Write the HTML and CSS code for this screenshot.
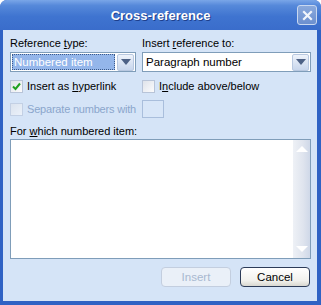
FILE: index.html
```html
<!DOCTYPE html>
<html lang="en">
<head>
    <meta charset="UTF-8">
    <title>Cross-reference</title>
    <link rel="stylesheet" href="styles.css">
</head>
<body>
    <div class="dialog">
        <div class="titlebar">
            <span class="title">Cross-reference</span>
            <button class="close-button" aria-label="Close">
                <svg width="11" height="11" viewBox="0 0 11 11">
                    <path d="M2 2 L9 9 M9 2 L2 9" stroke="#f2f5fb" stroke-width="2.2" stroke-linecap="square"/>
                </svg>
            </button>
        </div>

        <div class="content">
            <div class="row two-col">
                <div class="field">
                    <label>Reference <u>t</u>ype:</label>
                    <div class="select">
                        <span class="select-value selected">Numbered item</span>
                        <span class="drop-button"><span class="arrow"></span></span>
                    </div>
                </div>
                <div class="field">
                    <label>Insert <u>r</u>eference to:</label>
                    <div class="select">
                        <span class="select-value">Paragraph number</span>
                        <span class="drop-button"><span class="arrow"></span></span>
                    </div>
                </div>
            </div>

            <div class="row two-col checks">
                <label class="check">
                    <span class="box checked">
                        <svg width="9" height="9" viewBox="0 0 9 9"><path d="M1 4.5 L3.5 7 L8 1.5" fill="none" stroke="#21a121" stroke-width="2"/></svg>
                    </span>
                    <span>Insert as <u>h</u>yperlink</span>
                </label>
                <label class="check">
                    <span class="box"></span>
                    <span>I<u>n</u>clude above/below</span>
                </label>
            </div>

            <div class="row two-col checks">
                <label class="check disabled">
                    <span class="box"></span>
                    <span>Separate numbers with</span>
                </label>
                <div class="small-input"></div>
            </div>

            <label class="list-label">For <u>w</u>hich numbered item:</label>
            <div class="listbox">
                <div class="scrollbar">
                    <span class="scroll-up"></span>
                    <span class="scroll-down"></span>
                </div>
            </div>

            <div class="buttons">
                <button class="btn" disabled>Insert</button>
                <button class="btn">Cancel</button>
            </div>
        </div>
    </div>
</body>
</html>
```

FILE: styles.css
```css
:root {
    --frame-color: #2f62c4;
    --face-color: #d5e4f7;
    --text-color: #000000;
    --disabled-color: #8ba6cc;
    --border-color: #7f9db9;
}

body {
    margin: 0;
    font-family: 'Liberation Sans', Arial, sans-serif;
    font-size: 11px;
    color: var(--text-color);
    background: #ffffff;
}

.dialog {
    width: 321px;
    height: 305px;
    box-sizing: border-box;
    display: flex;
    flex-direction: column;
    background: var(--frame-color);
    border-radius: 7px 7px 0 0;
    overflow: hidden;
}

.titlebar {
    height: 30px;
    flex-shrink: 0;
    display: flex;
    align-items: center;
    justify-content: center;
    position: relative;
    background: linear-gradient(#7aa6e8 0%, #5689da 18%, #3f74d0 55%, #3a6dcb 100%);
}

.title {
    color: #ffffff;
    font-weight: bold;
    font-size: 13px;
    text-shadow: 1px 1px 0 #1d3f8c;
}

.close-button {
    position: absolute;
    right: 4px;
    top: 5px;
    width: 20px;
    height: 20px;
    padding: 0;
    border: 1px solid #c9d8f0;
    border-radius: 3px;
    background: linear-gradient(#8aa9dc, #6b8fcf);
    display: flex;
    align-items: center;
    justify-content: center;
}

.content {
    flex: 1;
    margin: 0 4px 4px 3px;
    background: var(--face-color);
    padding: 6px 6px 0 7px;
    display: flex;
    flex-direction: column;
}

.row {
    display: flex;
}

.two-col {
    gap: 6px;
}

.field {
    display: flex;
    flex-direction: column;
}

.field:first-child {
    width: 126px;
}

.field:last-child {
    flex: 1;
}

.field label {
    height: 15px;
    line-height: 15px;
}

.select {
    margin-top: 1px;
    height: 20px;
    box-sizing: border-box;
    border: 1px solid var(--border-color);
    background: #ffffff;
    display: flex;
    align-items: center;
    padding: 1px;
}

.select-value {
    flex: 1;
    height: 16px;
    line-height: 16px;
    padding-left: 2px;
    font-size: 11.5px;
    white-space: nowrap;
    overflow: hidden;
}

.select-value.selected {
    background: #94b6ea;
    outline: 1px dotted #3c5a8a;
    outline-offset: -1px;
    color: #ffffff;
    margin-right: 2px;
}

.drop-button {
    width: 17px;
    height: 17px;
    box-sizing: border-box;
    border: 1px solid #b8c8e0;
    border-radius: 2px;
    background: linear-gradient(#eef3fb, #c8d6ec);
    display: flex;
    align-items: center;
    justify-content: center;
}

.arrow {
    width: 0;
    height: 0;
    border-left: 5px solid transparent;
    border-right: 5px solid transparent;
    border-top: 6px solid #4d6185;
}

.checks {
    height: 18px;
    align-items: center;
}

.two-col.checks {
    margin-top: 5px;
}

.check {
    display: flex;
    align-items: center;
    gap: 4px;
    white-space: nowrap;
}

.check:first-child {
    width: 126px;
}

.box {
    width: 13px;
    height: 13px;
    flex-shrink: 0;
    box-sizing: border-box;
    border: 1px solid #b8c4d8;
    background: linear-gradient(135deg, #dfe3ea, #fbfbfc);
    display: flex;
    align-items: center;
    justify-content: center;
}

.check.disabled {
    color: var(--disabled-color);
    letter-spacing: -0.2px;
}

.check.disabled .box {
    opacity: 0.6;
}

.small-input {
    width: 22px;
    height: 18px;
    box-sizing: border-box;
    border: 1px solid #a9bedc;
    background: #d8e6f8;
}

.list-label {
    margin-top: 6px;
    height: 15px;
    line-height: 15px;
}

.listbox {
    margin-top: 0;
    height: 120px;
    box-sizing: border-box;
    border: 1px solid var(--border-color);
    background: #ffffff;
    display: flex;
    justify-content: flex-end;
}

.scrollbar {
    width: 17px;
    background: linear-gradient(90deg, #eef1f6, #dfe4ee 60%, #cfd8e8);
    display: flex;
    flex-direction: column;
    justify-content: space-between;
    align-items: center;
    padding: 6px 0;
}

.scroll-up {
    width: 0;
    height: 0;
    border-left: 6px solid transparent;
    border-right: 6px solid transparent;
    border-bottom: 6px solid #ffffff;
}

.scroll-down {
    width: 0;
    height: 0;
    border-left: 6px solid transparent;
    border-right: 6px solid transparent;
    border-top: 6px solid #ffffff;
}

.buttons {
    margin-top: 8px;
    display: flex;
    justify-content: flex-end;
    gap: 9px;
    padding-right: 1px;
}

.btn {
    width: 70px;
    height: 20px;
    font-family: inherit;
    font-size: 11.5px;
    color: var(--text-color);
    border: 1px solid #2c3c58;
    border-radius: 4px;
    background: linear-gradient(#ffffff, #f1f1ed 70%, #d9d8d0);
    padding: 0;
}

.btn:disabled {
    color: #a8b8d0;
    border-color: #c3cedf;
    background: #eaf0f8;
}
```
